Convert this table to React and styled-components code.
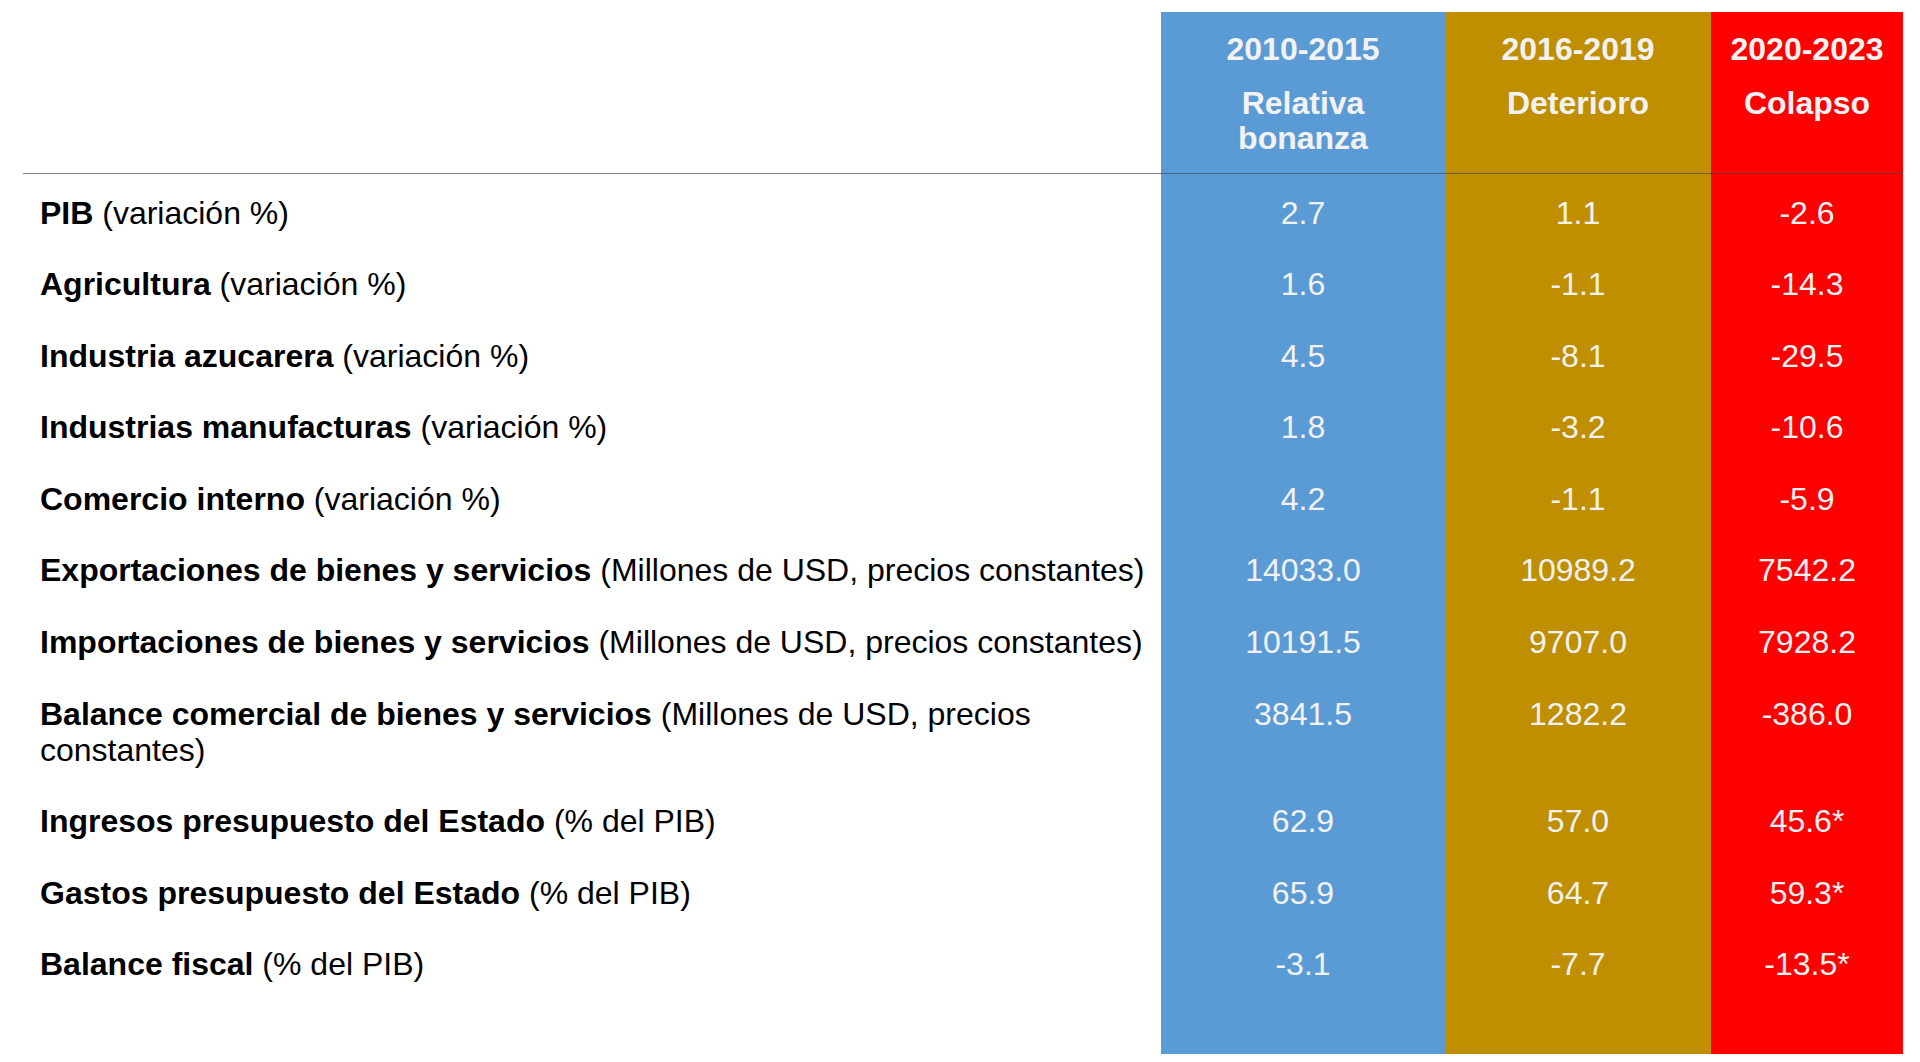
import styled, { createGlobalStyle } from "styled-components";

const GlobalStyle = createGlobalStyle`
  html, body {
    margin: 0;
    padding: 0;
    background: #ffffff;
  }
  body {
    font-family: "Liberation Sans", Arial, sans-serif;
    color: #000000;
  }
`;

const colors = {
  blue: "#5b9bd5",
  gold: "#bf8f00",
  red: "#ff0000",
};

const Page = styled.div`
  padding: 12px 17px 7px 23px;
`;

const Table = styled.div`
  display: grid;
  grid-template-columns: 1138px 284px 266px 192px;
`;

const HeadCell = styled.div`
  background: ${(p) => (p.$tone ? colors[p.$tone] : "transparent")};
  border-bottom: 1px solid ${(p) => (p.$tone ? "rgba(60,60,60,0.55)" : "#7f7f7f")};
  padding: 19px 0 17px;
  display: flex;
  flex-direction: column;
  align-items: center;
  color: #f2f2f2;
  font-weight: 700;
  text-align: center;
`;

const Period = styled.div`
  font-size: 32px;
  line-height: 36px;
`;

const Phase = styled.div`
  margin-top: 19px;
  font-size: 32px;
  line-height: 35px;
  min-height: 70px;
`;

const Label = styled.div`
  padding: 20.5px 8px 15.1px 17px;
  font-size: 32px;
  line-height: 36px;

  strong {
    font-weight: 700;
  }
`;

const Value = styled.div`
  background: ${(p) => colors[p.$tone]};
  padding: 20.5px 0 15.1px;
  font-size: 32px;
  line-height: 36px;
  color: #f2f2f2;
  text-align: center;
`;

const Filler = styled.div`
  height: 56px;
  background: ${(p) => (p.$tone ? colors[p.$tone] : "transparent")};
`;

const periods = [
  { tone: "blue", years: "2010-2015", phase: ["Relativa", "bonanza"] },
  { tone: "gold", years: "2016-2019", phase: ["Deterioro"] },
  { tone: "red", years: "2020-2023", phase: ["Colapso"] },
];

const rows = [
  ["PIB", "(variación %)", "2.7", "1.1", "-2.6"],
  ["Agricultura", "(variación %)", "1.6", "-1.1", "-14.3"],
  ["Industria azucarera", "(variación %)", "4.5", "-8.1", "-29.5"],
  ["Industrias manufacturas", "(variación %)", "1.8", "-3.2", "-10.6"],
  ["Comercio interno", "(variación %)", "4.2", "-1.1", "-5.9"],
  ["Exportaciones de bienes y servicios", "(Millones de USD, precios constantes)", "14033.0", "10989.2", "7542.2"],
  ["Importaciones de bienes y servicios", "(Millones de USD, precios constantes)", "10191.5", "9707.0", "7928.2"],
  ["Balance comercial de bienes y servicios", "(Millones de USD, precios constantes)", "3841.5", "1282.2", "-386.0"],
  ["Ingresos presupuesto del Estado", "(% del PIB)", "62.9", "57.0", "45.6*"],
  ["Gastos presupuesto del Estado", "(% del PIB)", "65.9", "64.7", "59.3*"],
  ["Balance fiscal", "(% del PIB)", "-3.1", "-7.7", "-13.5*"],
];

export default function App() {
  return (
    <>
      <GlobalStyle />
      <Page>
        <Table>
          <HeadCell />
          {periods.map((p) => (
            <HeadCell key={p.years} $tone={p.tone}>
              <Period>{p.years}</Period>
              <Phase>
                {p.phase.map((line) => (
                  <div key={line}>{line}</div>
                ))}
              </Phase>
            </HeadCell>
          ))}

          {rows.map(([name, unit, a, b, c]) => (
            <div key={name} style={{ display: "contents" }}>
              <Label>
                <strong>{name}</strong> {unit}
              </Label>
              <Value $tone="blue">{a}</Value>
              <Value $tone="gold">{b}</Value>
              <Value $tone="red">{c}</Value>
            </div>
          ))}

          <Filler />
          <Filler $tone="blue" />
          <Filler $tone="gold" />
          <Filler $tone="red" />
        </Table>
      </Page>
    </>
  );
}
